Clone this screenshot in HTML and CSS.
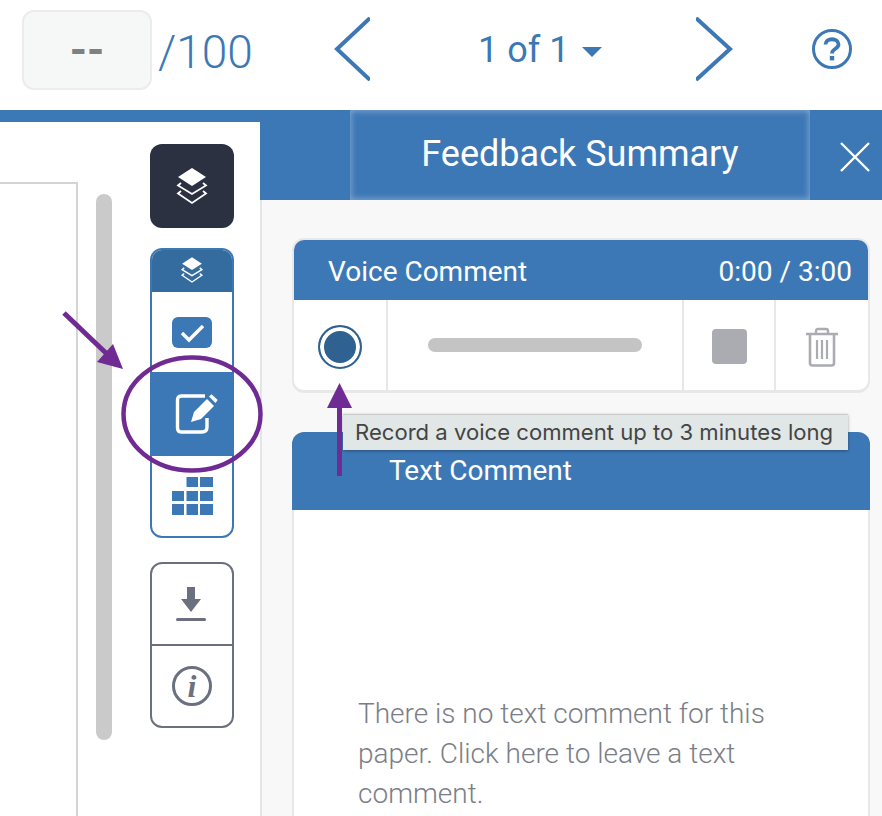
FILE: index.html
```html
<!DOCTYPE html>
<html lang="en">
<head>
  <meta charset="UTF-8">
  <meta name="viewport" content="width=device-width, initial-scale=1.0">
  <title>Feedback Summary</title>
  <link rel="stylesheet" href="styles.css">
</head>
<body>
  <header class="topbar">
    <div class="score-box">--</div>
    <div class="score-max">/100</div>
    <svg class="nav-prev" width="36" height="64" viewBox="0 0 36 64"><path d="M36 1 L3 32 L36 63" fill="none" stroke="#3d78b6" stroke-width="4"/></svg>
    <div class="pager">1 of 1<span class="caret"></span></div>
    <svg class="nav-next" width="38" height="64" viewBox="0 0 38 64"><path d="M0 1 L34 32 L0 63" fill="none" stroke="#3d78b6" stroke-width="4"/></svg>
    <svg class="help" width="40" height="40" viewBox="0 0 40 40">
      <circle cx="20" cy="20" r="18.500" fill="none" stroke="#3d78b6" stroke-width="3"/>
      <path d="M13.500 15.500 C13.500 8.500 26.500 8.500 26.500 15.500 C26.500 20 20 19.500 20 24.500" fill="none" stroke="#3d78b6" stroke-width="3.800"/>
      <rect x="17.800" y="27" width="4.400" height="4.400" fill="#3d78b6"/>
    </svg>
  </header>

  <div class="workspace">
    <section class="doc-area">
      <div class="paper"></div>
      <div class="scrollbar"></div>
      <nav class="tools">
        <button class="tool-layers">
          <svg width="34" height="38" viewBox="0 0 34 38">
            <path d="M17 1 L31 10 L17 19 L3 10 Z" fill="#fff"/>
            <path d="M6 16 L3 18.500 L17 27 L31 18.500 L28 16" fill="none" stroke="#fff" stroke-width="1.800"/>
            <path d="M6 24 L3 26.500 L17 36 L31 26.500 L28 24" fill="none" stroke="#fff" stroke-width="1.800"/>
          </svg>
        </button>
        <div class="tool-group">
          <div class="group-head">
            <svg width="24" height="28" viewBox="0 0 34 38">
              <path d="M17 1 L31 10 L17 19 L3 10 Z" fill="#fff"/>
              <path d="M6 16 L3 18.500 L17 27 L31 18.500 L28 16" fill="none" stroke="#fff" stroke-width="2"/>
              <path d="M6 24 L3 26.500 L17 36 L31 26.500 L28 24" fill="none" stroke="#fff" stroke-width="2"/>
            </svg>
          </div>
          <div class="group-item check-item">
            <svg width="40" height="31" viewBox="0 0 40 31">
              <rect width="40" height="31" rx="6" fill="#3d78b6"/>
              <path d="M10 16 L17 23 L31 9" fill="none" stroke="#fff" stroke-width="3.400"/>
            </svg>
          </div>
          <div class="group-item comment-item">
            <svg class="comment-icon" width="44" height="42" viewBox="0 0 44 42">
              <path d="M31 3 H7 Q3.500 3 3.500 7 V35 Q3.500 39 7 39 H28 Q33 39 33 34 V25" fill="none" stroke="#fff" stroke-width="3.400"/>
              <path d="M17 29 L20 19 L33 6 L40 13 L27 26 Z" fill="#fff"/>
              <path d="M35 3.500 L37.500 1.300 L43.700 7 L41.500 10 Z" fill="#fff"/>
            </svg>
          </div>
          <div class="group-item grid-item">
            <svg width="41" height="38" viewBox="0 0 41 38">
              <path d="M14.500 0 H26 V10 H14.500 Z M28 0 H41 V10 H28 Z M0 14 H12 V24 H0 Z M14.500 14 H26 V24 H14.500 Z M28 14 H41 V24 H28 Z M0 27 H12 V38 H0 Z M14.500 27 H26 V38 H14.500 Z M28 27 H41 V38 H28 Z" fill="#3d78b6"/>
            </svg>
          </div>
        </div>
        <div class="tool-group grey">
          <div class="group-item download-item">
            <svg width="32" height="36" viewBox="0 0 32 36">
              <path d="M11 1 H19 V13 H25 L15 26 L5 13 H11 Z" fill="#6b7080"/>
              <rect x="0" y="32" width="30" height="3" rx="1.500" fill="#6b7080"/>
            </svg>
          </div>
          <div class="group-item info-item">
            <span class="info-circle">i</span>
          </div>
        </div>
      </nav>
    </section>

    <aside class="panel">
      <div class="panel-head">
        <h1 class="panel-title">Feedback Summary</h1>
        <button class="panel-close">
          <svg width="32" height="32" viewBox="0 0 32 32"><path d="M2 2 L30 30 M30 2 L2 30" stroke="#fff" stroke-width="2.400"/></svg>
        </button>
      </div>
      <div class="panel-body">
        <div class="voice-card">
          <div class="voice-head">
            <span>Voice Comment</span>
            <span>0:00 / 3:00</span>
          </div>
          <div class="voice-row">
            <div class="cell cell-record"><span class="record-btn"></span></div>
            <div class="cell cell-progress"><span class="progress"></span></div>
            <div class="cell cell-stop"><span class="stop-btn"></span></div>
            <div class="cell cell-trash">
              <svg width="34" height="40" viewBox="0 0 34 40">
                <path d="M1 7 H33" stroke="#abacb2" stroke-width="2.600"/>
                <path d="M11 7 V4 Q11 2 13 2 H21 Q23 2 23 4 V7" fill="none" stroke="#abacb2" stroke-width="2.400"/>
                <path d="M5 7 V36 Q5 38.500 7.500 38.500 H26.500 Q29 38.500 29 36 V7" fill="none" stroke="#abacb2" stroke-width="2.600"/>
                <path d="M12 13 V32 M17 13 V32 M22 13 V32" stroke="#abacb2" stroke-width="2.200"/>
              </svg>
            </div>
          </div>
        </div>

        <div class="text-card">
          <div class="text-head">Text Comment</div>
          <div class="text-body">There is no text comment for this paper. Click here to leave a text comment.</div>
        </div>
      </div>
    </aside>
  </div>

  <div class="tooltip">Record a voice comment up to 3 minutes long</div>

  <!-- purple annotations drawn on top of the screenshot -->
  <svg class="annotations" width="882" height="816" viewBox="0 0 882 816">
    <ellipse cx="192" cy="414" rx="68.500" ry="56.500" fill="none" stroke="#6f2a94" stroke-width="4.500"/>
    <path d="M64 313 L108 355" stroke="#6f2a94" stroke-width="5"/>
    <path d="M123 369 L113 344 L97 362 Z" fill="#6f2a94"/>
    <path d="M339.500 405 V476" stroke="#6f2a94" stroke-width="5"/>
    <path d="M339.500 383 L352 408 L327 408 Z" fill="#6f2a94"/>
  </svg>
</body>
</html>
```

FILE: styles.css
```css
html, body {
  height: 100%;
  margin: 0;
  overflow: hidden;
}
body {
  position: relative;
  font-family: Roboto, Arial, sans-serif;
  background-color: #fff;
}
h1 {
  margin: 0;
  font-weight: 400;
}
button {
  padding: 0;
  border: none;
  background: none;
}

/* top bar */
.topbar {
  display: flex;
  align-items: flex-start;
  height: 110px;
  color: #3d78b6;
}
.score-box {
  box-sizing: border-box;
  width: 130px;
  height: 80px;
  margin: 10px 0 0 22px;
  background-color: #f6f7f7;
  border: 2px solid #ececec;
  border-radius: 12px;
  color: #808080;
  font-size: 44px;
  font-weight: 700;
  line-height: 76px;
  text-align: center;
}
.score-max {
  margin: 25px 0 0 6px;
  width: 94px;
  font-size: 46px;
  font-weight: 300;
  line-height: 54px;
  white-space: nowrap;
}
.nav-prev {
  margin: 17px 0 0 82px;
}
.pager {
  display: flex;
  align-items: center;
  width: 124px;
  margin: 27px 0 0 108px;
  font-size: 36px;
  font-weight: 400;
  line-height: 46px;
  white-space: nowrap;
}
.caret {
  width: 0;
  height: 0;
  margin: 4px 0 0 13px;
  border-left: 10px solid transparent;
  border-right: 10px solid transparent;
  border-top: 10px solid #3d78b6;
}
.nav-next {
  margin: 17px 0 0 94px;
}
.help {
  margin: 29px 0 0 78px;
}

/* main area */
.workspace {
  display: flex;
  height: 706px;
  background-color: #3d78b6;
}
.doc-area {
  display: flex;
  align-items: flex-start;
  box-sizing: border-box;
  width: 260px;
  margin-top: 12px;
  background-color: #fff;
}
.paper {
  box-sizing: border-box;
  width: 78px;
  height: 634px;
  margin-top: 60px;
  background-color: #fff;
  border-top: 2px solid #d4d4d4;
  border-right: 2px solid #d4d4d4;
}
.scrollbar {
  width: 16px;
  height: 546px;
  margin: 72px 0 0 18px;
  border-radius: 8px;
  background-color: #cacaca;
}

/* tool column */
.tools {
  display: flex;
  flex-direction: column;
  gap: 20px;
  width: 84px;
  margin: 22px 0 0 38px;
}
.tool-layers {
  display: flex;
  align-items: center;
  justify-content: center;
  height: 84px;
  border-radius: 12px;
  background-color: #2c3142;
}
.tool-group {
  box-sizing: border-box;
  overflow: hidden;
  border: 2px solid #3d78b6;
  border-radius: 12px;
}
.tool-group.grey {
  margin-top: 4px;
  border-color: #6b7080;
}
.group-head {
  display: flex;
  align-items: center;
  justify-content: center;
  height: 44px;
  margin: -2px -2px 0;
  background-color: #356ca0;
}
.group-item {
  display: flex;
  align-items: center;
  justify-content: center;
}
.check-item {
  height: 80px;
}
.comment-item {
  height: 84px;
  margin: 0 -2px;
  background-color: #3d78b6;
}
.comment-icon {
  margin-left: 8px;
}
.grid-item {
  height: 80px;
}
.download-item {
  height: 80px;
  border-bottom: 2px solid #6b7080;
}
.info-item {
  height: 80px;
}
.info-circle {
  box-sizing: border-box;
  width: 40px;
  height: 40px;
  border: 3px solid #6b7080;
  border-radius: 50%;
  color: #6b7080;
  font-family: "Liberation Serif", serif;
  font-size: 32px;
  font-style: italic;
  font-weight: 700;
  line-height: 35px;
  text-align: center;
}

/* feedback panel */
.panel {
  display: flex;
  flex-direction: column;
  width: 622px;
}
.panel-head {
  display: flex;
  height: 90px;
  padding-left: 90px;
  box-sizing: border-box;
  flex-shrink: 0;
}
.panel-title {
  width: 460px;
  color: #fff;
  font-size: 36px;
  line-height: 88px;
  text-align: center;
  box-shadow: inset 0 0 6px 1px rgba(255, 255, 255, 0.35);
}
.panel-close {
  display: flex;
  align-items: center;
  justify-content: center;
  width: 72px;
  padding: 4px 0 0 18px;
  box-sizing: border-box;
}
.panel-body {
  flex: 1;
  box-sizing: border-box;
  padding: 38px 12px 0 30px;
  background-color: #f8f8f8;
  border-left: 2px solid #e4e4e4;
}

/* voice comment card */
.voice-card {
  box-sizing: border-box;
  overflow: hidden;
  width: 578px;
  height: 155px;
  background-color: #fff;
  border: 2px solid #e8e8e8;
  border-bottom-width: 3px;
  border-radius: 12px;
}
.voice-head {
  display: flex;
  justify-content: space-between;
  height: 60px;
  padding: 0 16px 0 34px;
  background-color: #3d78b6;
  color: #fff;
  font-size: 28px;
  line-height: 64px;
}
.voice-row {
  display: flex;
  height: 90px;
}
.cell {
  display: flex;
  align-items: center;
  justify-content: center;
  box-sizing: border-box;
  border-right: 2px solid #e8e8e8;
}
.cell-record {
  width: 94px;
  padding-top: 4px;
}
.cell-progress {
  width: 296px;
}
.cell-stop {
  width: 92px;
  padding-top: 2px;
}
.cell-trash {
  width: 92px;
  padding-top: 4px;
  border-right: none;
}
.record-btn {
  box-sizing: border-box;
  width: 44px;
  height: 44px;
  border: 2px solid #2f6191;
  border-radius: 50%;
  background-color: #2f6191;
  box-shadow: inset 0 0 0 4px #fff;
}
.progress {
  width: 214px;
  height: 14px;
  border-radius: 7px;
  background-color: #c4c4c4;
}
.stop-btn {
  width: 35px;
  height: 35px;
  border-radius: 4px;
  background-color: #abacb2;
}

/* text comment card */
.text-card {
  width: 578px;
  margin-top: 39px;
}
.text-head {
  height: 78px;
  padding-left: 97px;
  border-radius: 12px 12px 0 0;
  background-color: #3d78b6;
  color: #fff;
  font-size: 28px;
  line-height: 78px;
}
.text-body {
  box-sizing: border-box;
  height: 306px;
  padding: 184px 90px 0 64px;
  overflow: hidden;
  background-color: #fff;
  border-left: 2px solid #e8e8e8;
  border-right: 2px solid #e8e8e8;
  color: #7b7e86;
  font-size: 28px;
  font-weight: 300;
  line-height: 40px;
}

/* overlays */
.tooltip {
  position: absolute;
  left: 343px;
  top: 414px;
  box-sizing: border-box;
  width: 505px;
  height: 36px;
  padding-left: 12px;
  background-color: #e0e7e6;
  border-top: 1px solid #c9cdcc;
  box-shadow: 0 1px 3px rgba(0, 0, 0, 0.35);
  color: #444;
  font-family: Inter, Arial, sans-serif;
  font-size: 22.100px;
  line-height: 35px;
  white-space: nowrap;
}
.annotations {
  position: absolute;
  left: 0;
  top: 0;
  pointer-events: none;
}
```
